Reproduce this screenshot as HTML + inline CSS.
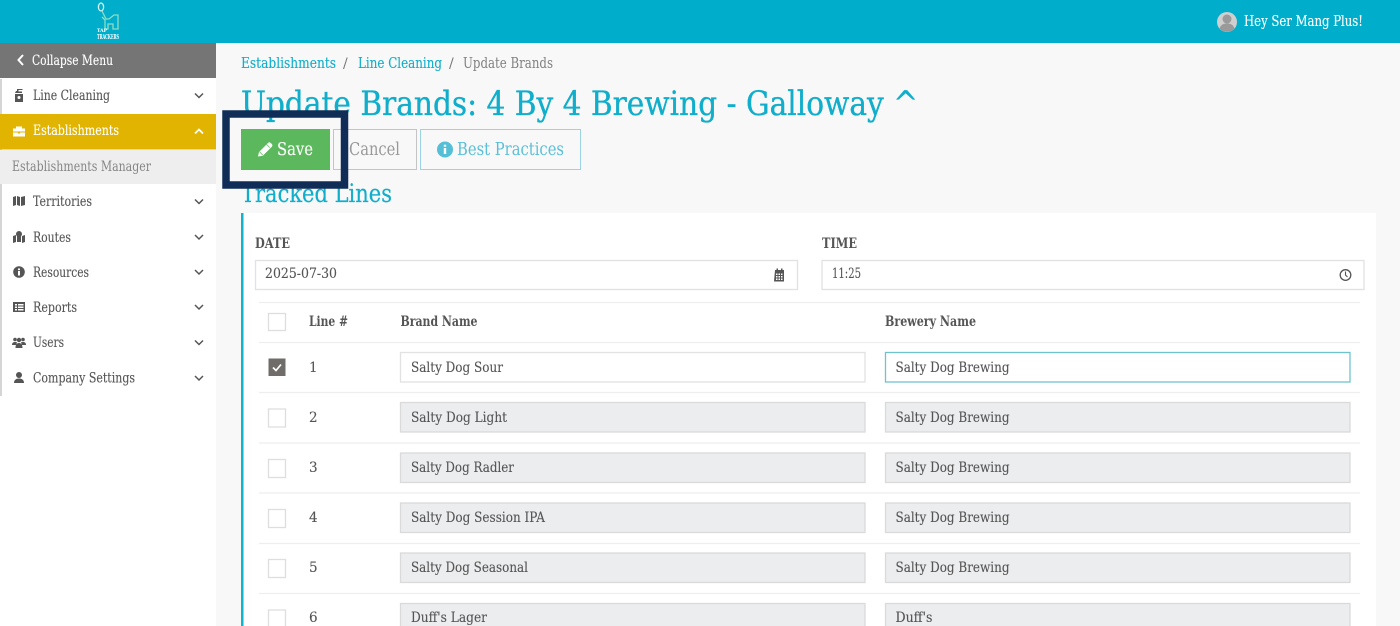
<!DOCTYPE html>
<html><head><meta charset="utf-8"><title>Update Brands</title>
<style>
html,body{margin:0;padding:0;background:#f8f8f8;width:1400px;height:626px;overflow:hidden}
svg{display:block;filter:blur(.35px)}
text{font-family:"DejaVu Serif","Liberation Serif",serif;fill:#555;font-size:13.500px;stroke:#555;stroke-width:.12}
.t{fill:#10aecb;stroke:#10aecb}.w{fill:#fff;stroke:#fff}.b{font-weight:bold;stroke:none}
.n{stroke:none}
.i{fill:#fff;stroke:#e2e2e2;stroke-width:1.300}.d{fill:#ecedef;stroke:#dadada;stroke-width:1.300}.c{fill:#fff;stroke:#dedede;stroke-width:1.300}
.chev{fill:none;stroke:#555;stroke-width:1.500}
.r{stroke:#eeeeee;stroke-width:1.300}
.ic{fill:#555}
</style></head><body>
<svg width="1400" height="626" viewBox="0 0 1400 626" xmlns="http://www.w3.org/2000/svg">
<rect width="1400" height="626" fill="#f8f8f8"/>
<rect width="1400" height="43" fill="#00aecb"/>
<!-- logo -->
<g fill="none" stroke="#8edcc4" stroke-width="1.300">
<ellipse cx="101" cy="7" rx="2.600" ry="4" stroke="#d9f2ee"/>
<path d="M102 11l4 8h3l5-4h4v14h-5v-5h-5v5h-3v-9l-3-3"/>
</g>
<text x="97" y="32" class="w b" style="font-size:5px" textLength="10" lengthAdjust="spacingAndGlyphs">TAP</text>
<text x="97" y="39" class="w b" style="font-size:6.500px" textLength="22" lengthAdjust="spacingAndGlyphs">TRACKERS</text>
<!-- user -->
<circle cx="1227" cy="22" r="10" fill="#cfcfcf"/>
<circle cx="1227" cy="19" r="4.500" fill="#9a9a9a"/>
<path d="M1219.500 28.500c1.500-4 4-5 7.500-5s6 1 7.500 5a10 10 0 0 1-15 0z" fill="#9a9a9a"/>
<text x="1244" y="26" class="w" style="font-size:14.500px" textLength="119" lengthAdjust="spacingAndGlyphs">Hey Ser Mang Plus!</text>

<!-- sidebar -->
<rect x="0" y="43" width="216" height="583" fill="#fff"/>
<rect x="0" y="79" width="2" height="317" fill="#d5d5d5"/>
<rect x="0" y="43" width="216" height="35" fill="#757575"/>
<path d="M23 55l-4.500 5 4.500 5" fill="none" stroke="#fff" stroke-width="2"/>
<text x="32" y="65" class="w" textLength="81" lengthAdjust="spacingAndGlyphs">Collapse Menu</text>
<rect x="0" y="114" width="216" height="35.500" fill="#e0b400"/>
<rect x="0" y="150" width="216" height="34" fill="#eeeeee"/>

<path class="ic" d="M15 93h7v-1.500h-3.500v-1.500h4v-1h-5.500v2h-1zM15 94h8v8h-8zM17.500 97.500a1.500 1.500 0 1 0 3 0a1.500 1.500 0 1 0-3 0" fill-rule="evenodd"/>
<text x="33" y="100" textLength="77" lengthAdjust="spacingAndGlyphs">Line Cleaning</text>
<path class="chev" d="M195 93.500l4 4 4-4"/>

<path d="M13 128.500h3v-2h6v2h3v3h-12zM13 132.500h5v1h2v-1h5v4h-12z" fill="#fff"/>
<text x="33" y="135" class="w" textLength="86" lengthAdjust="spacingAndGlyphs">Establishments</text>
<path d="M195 133.500l4-4 4 4" fill="none" stroke="#fff" stroke-width="1.800"/>

<text x="12" y="171" class="n" style="fill:#858585" textLength="139" lengthAdjust="spacingAndGlyphs">Establishments Manager</text>

<path class="ic" d="M13 197l3-1v9l-3 1zM17 196l3 1v9l-3-1zM21 197l4-1v9l-4 1z"/>
<text x="33" y="206" textLength="59" lengthAdjust="spacingAndGlyphs">Territories</text>
<path class="chev" d="M195 199.500l4 4 4-4"/>

<path class="ic" d="M13 236l3-1v7l-3 1zM22 236l3-1v7l-3 1zM17 236h4v6l-4 0zM19 231a3 3 0 0 1 3 3c0 1.500-1.500 3-3 5c-1.500-2-3-3.500-3-5a3 3 0 0 1 3-3z"/>
<text x="33" y="242" textLength="38" lengthAdjust="spacingAndGlyphs">Routes</text>
<path class="chev" d="M195 235l4 4 4-4"/>

<circle class="ic" cx="19" cy="272" r="5.800"/><rect x="18" y="271" width="2" height="4.500" fill="#fff"/><rect x="18" y="268.500" width="2" height="1.600" fill="#fff"/>
<text x="33" y="277" textLength="56" lengthAdjust="spacingAndGlyphs">Resources</text>
<path class="chev" d="M195 270l4 4 4-4"/>

<path class="ic" fill-rule="evenodd" d="M13 302h12v10h-12zM15 304v1.500h2v-1.500zM18 304v1.500h5.500v-1.500zM15 306.500v1.500h2v-1.500zM18 306.500v1.500h5.500v-1.500zM15 309v1.500h2v-1.500zM18 309v1.500h5.500v-1.500z"/>
<text x="33" y="312" textLength="44" lengthAdjust="spacingAndGlyphs">Reports</text>
<path class="chev" d="M195 305l4 4 4-4"/>

<g class="ic"><circle cx="15" cy="339.500" r="1.800"/><circle cx="23" cy="339.500" r="1.800"/><circle cx="19" cy="340" r="2.200"/><path d="M12 345c0-2 1-3 3-3s2 .5 2 .5l-1 2.500zM26 345c0-2-1-3-3-3s-2 .5-2 .5l1 2.500zM15.500 348c0-3 1-5 3.500-5s3.500 2 3.500 5z"/></g>
<text x="33" y="347" textLength="31" lengthAdjust="spacingAndGlyphs">Users</text>
<path class="chev" d="M195 340.500l4 4 4-4"/>

<g class="ic"><circle cx="19" cy="375" r="3"/><path d="M14 383c0-3 2-4.500 5-4.500s5 1.500 5 4.500z"/></g>
<text x="33" y="382.500" textLength="102" lengthAdjust="spacingAndGlyphs">Company Settings</text>
<path class="chev" d="M195 376l4 4 4-4"/>

<!-- breadcrumb -->
<text x="241" y="68" class="t" style="font-size:14.500px" textLength="95" lengthAdjust="spacingAndGlyphs">Establishments</text>
<text x="343" y="68" class="n" style="font-size:14px;fill:#777">/</text>
<text x="358" y="68" class="t" style="font-size:14.500px" textLength="84" lengthAdjust="spacingAndGlyphs">Line Cleaning</text>
<text x="449" y="68" class="n" style="font-size:14px;fill:#777">/</text>
<text x="463" y="68" class="n" style="font-size:14.500px;fill:#808080" textLength="90" lengthAdjust="spacingAndGlyphs">Update Brands</text>

<text x="241" y="115" class="t" style="font-size:34px;stroke-width:.35" textLength="677" lengthAdjust="spacingAndGlyphs">Update Brands: 4 By 4 Brewing - Galloway ^</text>

<!-- buttons -->
<rect x="241" y="129" width="89" height="41" fill="#5cb85c"/>
<path d="M258 156.500l1-4.500 9-9c.8-.8 2-.8 2.800 0l1 1c.8.8.8 2 0 2.800l-9 9z" fill="#fff"/>
<path d="M259.500 151.800l3.200 3.200M266.600 144.400l3.200 3.200" stroke="#5cb85c" stroke-width=".7" fill="none"/>
<text x="277" y="155" class="w" style="font-size:17.500px" textLength="36" lengthAdjust="spacingAndGlyphs">Save</text>
<rect x="333.500" y="129.500" width="83" height="40" fill="#f8f8f8" stroke="#c4c4c4"/>
<text x="349" y="155" class="n" style="font-size:17.500px;fill:#999" textLength="51" lengthAdjust="spacingAndGlyphs">Cancel</text>
<rect x="420.500" y="129.500" width="160" height="40" fill="#f8f8f8" stroke="#9bd3e2"/>
<circle cx="445" cy="149.500" r="8" fill="#55bfd8"/><rect x="443.800" y="148" width="2.400" height="6" fill="#fff"/><rect x="443.800" y="144.700" width="2.400" height="2" fill="#fff"/>
<text x="457" y="155" class="n" style="font-size:17.500px;fill:#5bbfd8" textLength="107" lengthAdjust="spacingAndGlyphs">Best Practices</text>

<text x="241" y="202" class="t" style="font-size:25px;stroke-width:.2" textLength="151" lengthAdjust="spacingAndGlyphs">Tracked Lines</text>

<!-- highlight -->
<rect x="226" y="114" width="118.500" height="71" fill="none" stroke="#0f2d56" stroke-width="7.500"/>

<!-- panel -->
<rect x="243" y="213" width="1133" height="413" fill="#fff"/>
<rect x="241" y="213" width="2.500" height="413" fill="#10b3c9"/>
<text x="255" y="248" class="b" style="font-size:13.500px" textLength="35" lengthAdjust="spacingAndGlyphs">DATE</text>
<text x="822" y="248" class="b" style="font-size:13.500px" textLength="35" lengthAdjust="spacingAndGlyphs">TIME</text>
<rect class="i" x="255.500" y="260.500" width="542" height="29"/>
<rect class="i" x="822" y="260.500" width="542" height="29"/>
<text x="265" y="278" textLength="72" lengthAdjust="spacingAndGlyphs">2025-07-30</text>
<text x="832" y="278" textLength="29" lengthAdjust="spacingAndGlyphs">11:25</text>
<path class="ic" fill-rule="evenodd" d="M775 270h1.500v-1.500h1.500v1.500h3v-1.500h1.500v1.500h1.500v11.500h-10zM776 273.500v1.500h1.500v-1.500zM778.500 273.500v1.500h1.500v-1.500zM781 273.500v1.500h1.500v-1.500zM776 276v1.500h1.500v-1.500zM778.500 276v1.500h1.500v-1.500zM781 276v1.500h1.500v-1.500zM776 278.500v1.500h1.500v-1.500zM778.500 278.500v1.500h1.500v-1.500zM781 278.500v1.500h1.500v-1.500z"/>
<circle cx="1345.500" cy="275" r="5.300" fill="none" stroke="#555" stroke-width="1.300"/>
<path d="M1345.500 271.500v3.500l2 2" fill="none" stroke="#555" stroke-width="1.100"/>

<!-- table -->
<g class="r">
<line x1="259" x2="1360" y1="302.500" y2="302.500"/>
<line x1="259" x2="1360" y1="342.500" y2="342.500"/>
<line x1="259" x2="1360" y1="392.500" y2="392.500"/>
<line x1="259" x2="1360" y1="443" y2="443"/>
<line x1="259" x2="1360" y1="493" y2="493"/>
<line x1="259" x2="1360" y1="543.500" y2="543.500"/>
<line x1="259" x2="1360" y1="593.500" y2="593.500"/>
</g>
<rect class="c" x="268.500" y="313.500" width="17" height="17"/>
<text x="309" y="326" class="b" textLength="39" lengthAdjust="spacingAndGlyphs">Line #</text>
<text x="400.500" y="326" class="b" textLength="77" lengthAdjust="spacingAndGlyphs">Brand Name</text>
<text x="885" y="326" class="b" textLength="91" lengthAdjust="spacingAndGlyphs">Brewery Name</text>

<rect x="268.500" y="358.500" width="17" height="17.500" fill="#6f6c69"/>
<path d="M273 367.500l3 3 5-6" fill="none" stroke="#fff" stroke-width="1.700"/>
<text x="309" y="372">1</text>
<rect class="i" x="400.500" y="352.500" width="464.500" height="29.500"/>
<text x="411" y="372" textLength="92" lengthAdjust="spacingAndGlyphs">Salty Dog Sour</text>
<rect x="885.500" y="352.500" width="464.500" height="29.500" fill="#fff" stroke="#6fc4cc" stroke-width="1.300"/>
<text x="895.500" y="372" textLength="114" lengthAdjust="spacingAndGlyphs">Salty Dog Brewing</text>

<rect class="c" x="268.500" y="409" width="17" height="18"/>
<text x="309" y="422">2</text>
<rect class="d" x="400.500" y="402.500" width="464.500" height="29.500"/>
<text x="411" y="422" textLength="96" lengthAdjust="spacingAndGlyphs">Salty Dog Light</text>
<rect class="d" x="885.500" y="402.500" width="464.500" height="29.500"/>
<text x="895.500" y="422" textLength="114" lengthAdjust="spacingAndGlyphs">Salty Dog Brewing</text>

<rect class="c" x="268.500" y="459.500" width="17" height="18"/>
<text x="309" y="472">3</text>
<rect class="d" x="400.500" y="453" width="464.500" height="29.500"/>
<text x="411" y="472" textLength="103" lengthAdjust="spacingAndGlyphs">Salty Dog Radler</text>
<rect class="d" x="885.500" y="453" width="464.500" height="29.500"/>
<text x="895.500" y="472" textLength="114" lengthAdjust="spacingAndGlyphs">Salty Dog Brewing</text>

<rect class="c" x="268.500" y="509.500" width="17" height="18"/>
<text x="309" y="522">4</text>
<rect class="d" x="400.500" y="503" width="464.500" height="29.500"/>
<text x="411" y="522" textLength="134" lengthAdjust="spacingAndGlyphs">Salty Dog Session IPA</text>
<rect class="d" x="885.500" y="503" width="464.500" height="29.500"/>
<text x="895.500" y="522" textLength="114" lengthAdjust="spacingAndGlyphs">Salty Dog Brewing</text>

<rect class="c" x="268.500" y="559.500" width="17" height="18"/>
<text x="309" y="572">5</text>
<rect class="d" x="400.500" y="553" width="464.500" height="29.500"/>
<text x="411" y="572" textLength="117" lengthAdjust="spacingAndGlyphs">Salty Dog Seasonal</text>
<rect class="d" x="885.500" y="553" width="464.500" height="29.500"/>
<text x="895.500" y="572" textLength="114" lengthAdjust="spacingAndGlyphs">Salty Dog Brewing</text>

<rect class="c" x="268.500" y="610" width="17" height="18"/>
<text x="309" y="622">6</text>
<rect class="d" x="400.500" y="603.500" width="464.500" height="29.500"/>
<text x="411" y="622" textLength="76" lengthAdjust="spacingAndGlyphs">Duff's Lager</text>
<rect class="d" x="885.500" y="603.500" width="464.500" height="29.500"/>
<text x="895.500" y="622" textLength="37" lengthAdjust="spacingAndGlyphs">Duff's</text>
</svg>
</body></html>
